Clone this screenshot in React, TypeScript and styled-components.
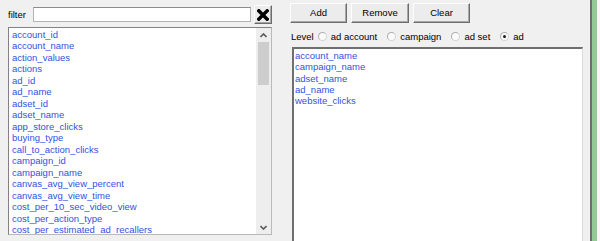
import React from 'react'
import styled, { createGlobalStyle } from 'styled-components'

const GlobalStyle = createGlobalStyle`
  html, body {
    margin: 0;
    padding: 0;
    background: #f0f0f0;
  }
  body {
    font-family: 'Liberation Sans', Arial, sans-serif;
    font-size: 9.5px;
    color: #000;
  }
`

const fields = [
  'account_id',
  'account_name',
  'action_values',
  'actions',
  'ad_id',
  'ad_name',
  'adset_id',
  'adset_name',
  'app_store_clicks',
  'buying_type',
  'call_to_action_clicks',
  'campaign_id',
  'campaign_name',
  'canvas_avg_view_percent',
  'canvas_avg_view_time',
  'cost_per_10_sec_video_view',
  'cost_per_action_type',
  'cost_per_estimated_ad_recallers',
]

const selected = ['account_name', 'campaign_name', 'adset_name', 'ad_name', 'website_clicks']

const levels = ['ad account', 'campaign', 'ad set', 'ad']

const Window = styled.div`
  display: flex;
  width: 600px;
  height: 241px;
  overflow: hidden;
  background: #f0f0f0;
`

const LeftPane = styled.div`
  display: flex;
  flex-direction: column;
  width: 264px;
  margin-left: 8px;
  padding-top: 5px;
`

const FilterRow = styled.div`
  display: flex;
  align-items: center;
  height: 19px;
`

const FilterLabel = styled.label`
  width: 25px;
  line-height: 12px;
`

const FilterInput = styled.input`
  box-sizing: border-box;
  width: 218px;
  height: 15px;
  margin: 0;
  padding: 0 2px;
  border: 1px solid #b4b4b4;
  border-top-color: #8c8c8c;
  background: #fff;
  font: inherit;
  outline: none;
`

const RaisedButton = styled.button<{ $width: number; $height: number }>`
  box-sizing: border-box;
  display: flex;
  align-items: center;
  justify-content: center;
  width: ${({ $width }) => $width}px;
  height: ${({ $height }) => $height}px;
  margin: 0;
  padding: 0;
  background: #ececec;
  border: 1px solid;
  border-color: #fdfdfd #6d6d6d #6d6d6d #fdfdfd;
  box-shadow: inset -1px -1px 0 #a8a8a8;
  font: inherit;
  color: #000;
  line-height: 12px;
`

const ClearFilter = styled(RaisedButton)`
  margin-left: 3px;
`

const ListBox = styled.div`
  box-sizing: border-box;
  display: flex;
  height: 208px;
  margin-top: 3px;
  background: #fff;
  border: 1px solid #b9b9b9;
  border-top-color: #828282;
  border-left-color: #828282;
  overflow: hidden;
`

const Items = styled.div<{ $pad: number }>`
  flex: 1;
  padding: 1px 0 0 ${({ $pad }) => $pad}px;
  overflow: hidden;
`

const Item = styled.div`
  height: 11.47px;
  line-height: 11.47px;
  color: #3052e4;
  white-space: nowrap;
`

const ScrollBar = styled.div`
  display: flex;
  flex-direction: column;
  width: 15px;
  background: #eeeeee;
`

const ScrollArrow = styled.div`
  display: flex;
  align-items: center;
  justify-content: center;
  height: 14px;
`

const ScrollThumb = styled.div`
  height: 43px;
  margin: 0 2px 0 2px;
  background: #cdcdcd;
`

const ScrollTrack = styled.div`
  flex: 1;
`

const RightPane = styled.div`
  display: flex;
  flex-direction: column;
  width: 293px;
  margin-left: 18px;
`

const ButtonRow = styled.div`
  display: flex;
  gap: 4px;
  margin-top: 3px;
`

const LevelRow = styled.div`
  display: flex;
  align-items: center;
  height: 14px;
  margin-top: 7px;
  padding-left: 1px;
  line-height: 12px;
`

const LevelLabel = styled.span`
  margin-right: 4px;
`

const Option = styled.label`
  display: flex;
  align-items: center;
  gap: 4px;
  margin-right: 10px;
`

const Radio = styled.span<{ $checked: boolean }>`
  box-sizing: border-box;
  display: flex;
  align-items: center;
  justify-content: center;
  width: 9px;
  height: 9px;
  border-radius: 50%;
  border: 1px solid #d4d4d4;
  border-top-color: #b0b0b0;
  border-left-color: #b0b0b0;
  background: #fafafa;

  &::after {
    content: '';
    width: 3px;
    height: 3px;
    border-radius: 50%;
    background: ${({ $checked }) => ($checked ? '#1a1a1a' : 'transparent')};
  }
`

const SelectedBox = styled.div`
  box-sizing: border-box;
  height: 200px;
  margin: 3px 0 0 2px;
  padding: 1px 0 0 1px;
  background: #fff;
  border-top: 2px solid #6f6f6f;
  border-left: 2px solid #6f6f6f;
  border-right: 1px solid #dcdcdc;
`

const Gutter = styled.div`
  width: 7px;
`

const FrameEdge = styled.div`
  width: 5px;
  border-left: 2px solid #6e6e6e;
  border-right: 3px solid #f8f8f8;
  background: #95c995;
`

const Chevron = ({ up }: { up?: boolean }) => (
  <svg width="7" height="5" viewBox="0 0 7 5">
    <path
      d={up ? 'M0.5 4 L3.5 1 L6.5 4' : 'M0.5 1 L3.5 4 L6.5 1'}
      fill="none"
      stroke="#5a5a5a"
      strokeWidth="1.6"
    />
  </svg>
)

const CrossIcon = () => (
  <svg width="12" height="12" viewBox="0 0 12 12">
    <path d="M1.8 1.8 L10.2 10.2 M10.2 1.8 L1.8 10.2" stroke="#000" strokeWidth="3.4" strokeLinecap="square" />
  </svg>
)

export default function App() {
  return (
    <>
      <GlobalStyle />
      <Window>
        <LeftPane>
          <FilterRow>
            <FilterLabel>filter</FilterLabel>
            <FilterInput type="text" />
            <ClearFilter $width={18} $height={19}>
              <CrossIcon />
            </ClearFilter>
          </FilterRow>
          <ListBox>
            <Items $pad={3}>
              {fields.map((f) => (
                <Item key={f}>{f}</Item>
              ))}
            </Items>
            <ScrollBar>
              <ScrollArrow>
                <Chevron up />
              </ScrollArrow>
              <ScrollThumb />
              <ScrollTrack />
              <ScrollArrow>
                <Chevron />
              </ScrollArrow>
            </ScrollBar>
          </ListBox>
        </LeftPane>
        <RightPane>
          <ButtonRow>
            <RaisedButton $width={57} $height={20}>Add</RaisedButton>
            <RaisedButton $width={58} $height={20}>Remove</RaisedButton>
            <RaisedButton $width={57} $height={20}>Clear</RaisedButton>
          </ButtonRow>
          <LevelRow>
            <LevelLabel>Level</LevelLabel>
            {levels.map((l) => (
              <Option key={l}>
                <Radio $checked={l === 'ad'} />
                {l}
              </Option>
            ))}
          </LevelRow>
          <SelectedBox>
            {selected.map((f) => (
              <Item key={f}>{f}</Item>
            ))}
          </SelectedBox>
        </RightPane>
        <Gutter />
        <FrameEdge />
      </Window>
    </>
  )
}
